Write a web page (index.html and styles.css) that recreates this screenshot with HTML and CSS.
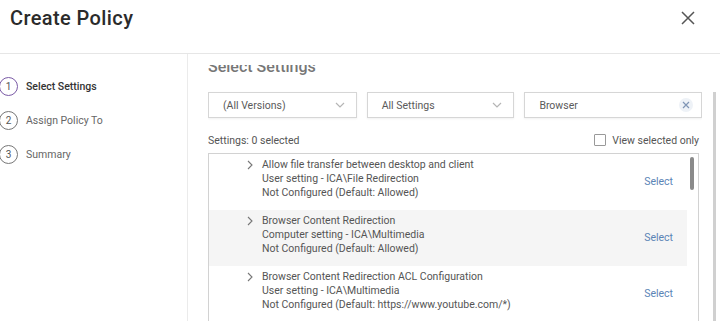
FILE: index.html
```html
<!DOCTYPE html>
<html lang="en">
<head>
    <meta charset="UTF-8">
    <title>Create Policy</title>
    <link rel="stylesheet" href="styles.css">
</head>
<body>
    <div class="dialog">
        <div class="head">
            <h1>Create Policy</h1>
            <svg class="close" width="14" height="14" viewBox="0 0 14 14">
                <path d="M1 1 L13 13 M13 1 L1 13" stroke="#555" stroke-width="1.5" fill="none"/>
            </svg>
        </div>
        <div class="main">
            <div class="steps">
                <div class="step active"><span class="num">1</span>Select Settings</div>
                <div class="step"><span class="num">2</span>Assign Policy To</div>
                <div class="step"><span class="num">3</span>Summary</div>
            </div>
            <div class="content">
                <div class="scroll">
                    <h2>Select Settings</h2>
                    <div class="filters">
                        <div class="field f1">(All Versions)
                            <svg width="10" height="6" viewBox="0 0 10 6"><path d="M1 1 L5 5 L9 1" stroke="#b5b5b5" stroke-width="1.2" fill="none"/></svg>
                        </div>
                        <div class="field f2">All Settings
                            <svg width="10" height="6" viewBox="0 0 10 6"><path d="M1 1 L5 5 L9 1" stroke="#b5b5b5" stroke-width="1.2" fill="none"/></svg>
                        </div>
                        <div class="field f3">Browser
                            <span class="clear"><svg width="8" height="8" viewBox="0 0 8 8"><path d="M1 1 L7 7 M7 1 L1 7" stroke="#7f95b5" stroke-width="1.2" fill="none"/></svg></span>
                        </div>
                    </div>
                    <div class="bar">
                        <span>Settings: 0 selected</span>
                        <label class="check"><span class="box"></span>View selected only</label>
                    </div>
                    <div class="list">
                        <div class="rows">
                            <div class="row">
                                <svg class="chev" width="6" height="10" viewBox="0 0 6 10"><path d="M1 1 L5 5 L1 9" stroke="#777" stroke-width="1.1" fill="none"/></svg>
                                <div class="info">
                                    <div>Allow file transfer between desktop and client</div>
                                    <div>User setting - ICA\File Redirection</div>
                                    <div>Not Configured (Default: Allowed)</div>
                                </div>
                                <a class="sel">Select</a>
                            </div>
                            <div class="row alt">
                                <svg class="chev" width="6" height="10" viewBox="0 0 6 10"><path d="M1 1 L5 5 L1 9" stroke="#777" stroke-width="1.1" fill="none"/></svg>
                                <div class="info">
                                    <div>Browser Content Redirection</div>
                                    <div>Computer setting - ICA\Multimedia</div>
                                    <div>Not Configured (Default: Allowed)</div>
                                </div>
                                <a class="sel">Select</a>
                            </div>
                            <div class="row">
                                <svg class="chev" width="6" height="10" viewBox="0 0 6 10"><path d="M1 1 L5 5 L1 9" stroke="#777" stroke-width="1.1" fill="none"/></svg>
                                <div class="info">
                                    <div>Browser Content Redirection ACL Configuration</div>
                                    <div>User setting - ICA\Multimedia</div>
                                    <div>Not Configured (Default: https://www.youtube.com/*)</div>
                                </div>
                                <a class="sel">Select</a>
                            </div>
                        </div>
                        <div class="track"><div class="thumb"></div></div>
                    </div>
                </div>
                <div class="pagebar"></div>
            </div>
        </div>
    </div>
</body>
</html>
```

FILE: styles.css
```css
*{
    box-sizing: border-box;
}
body{
    margin: 0;
    padding: 0;
    font-family: Roboto, "Liberation Sans", sans-serif;
    color: #555;
    background: #fff;
}
.dialog{
    width: 720px;
    height: 321px;
    overflow: hidden;
    display: flex;
    flex-direction: column;
}
    .head{
        height: 54px;
        flex: none;
        border-bottom: 1px solid #e6e6e6;
        display: flex;
        justify-content: space-between;
        padding: 5px 25px 0 10px;
    }
        .head h1{
            margin: 0;
            font-size: 20px;
            font-weight: 500;
            letter-spacing: 0.4px;
            color: #2b2b2b;
            line-height: 26px;
        }
        .close{
            margin-top: 6px;
        }
    .main{
        flex: 1;
        display: flex;
        min-height: 0;
    }
        .steps{
            width: 188px;
            flex: none;
            border-right: 1px solid #ebebeb;
            padding-top: 22px;
        }
            .step{
                display: flex;
                align-items: center;
                height: 20px;
                margin-bottom: 14px;
                font-size: 10.5px;
                color: #666;
            }
            .step .num{
                width: 19px;
                height: 19px;
                margin-left: -1px;
                margin-right: 8px;
                border: 1.3px solid #777;
                border-radius: 50%;
                display: flex;
                align-items: center;
                justify-content: center;
                font-size: 10px;
                color: #555;
            }
            .step.active{
                color: #333;
                font-weight: 500;
            }
            .step.active .num{
                border-color: #7a5aa6;
                font-weight: 400;
            }
        .content{
            flex: 1;
            display: flex;
            padding: 11px 0 0 20px;
            min-width: 0;
        }
            .scroll{
                width: 494px;
                overflow: hidden;
            }
                .scroll h2{
                    margin: -8px 0 0;
                    font-size: 16px;
                    line-height: 20px;
                    font-weight: 500;
                    color: #777;
                }
                .filters{
                    display: flex;
                    gap: 10px;
                    margin-top: 15px;
                }
                    .field{
                        height: 26px;
                        border: 1px solid #d6d6d6;
                        box-shadow: 0 1px 2px rgba(0,0,0,0.06);
                        display: flex;
                        align-items: center;
                        justify-content: space-between;
                        padding: 0 11px 0 14px;
                        font-size: 10.5px;
                        color: #5a5a5a;
                    }
                    .f1{ width: 149px; }
                    .f2{ width: 148px; }
                    .f3{ width: 178px; padding-right: 8px; }
                    .clear{
                        width: 14px;
                        height: 14px;
                        border-radius: 50%;
                        background: #eef2f7;
                        display: flex;
                        align-items: center;
                        justify-content: center;
                    }
                .bar{
                    display: flex;
                    justify-content: space-between;
                    align-items: center;
                    margin-top: 14px;
                    height: 16px;
                    font-size: 10.5px;
                    color: #555;
                    padding-right: 3px;
                }
                    .check{
                        display: flex;
                        align-items: center;
                        gap: 6px;
                    }
                    .check .box{
                        width: 12px;
                        height: 12px;
                        border: 1px solid #999;
                        border-radius: 1px;
                    }
                .list{
                    margin-top: 5px;
                    width: 491px;
                    border: 1px solid #d2d2d2;
                    display: flex;
                }
                    .rows{
                        flex: 1;
                    }
                        .row{
                            display: flex;
                            align-items: center;
                            height: 56px;
                            padding: 4px 14px 10px 38px;
                            font-size: 10.5px;
                            line-height: 14px;
                            color: #555;
                        }
                        .row.alt{
                            background: #f5f5f5;
                        }
                            .chev{
                                align-self: flex-start;
                                margin-top: 2px;
                                margin-right: 9px;
                            }
                            .info{
                                flex: 1;
                            }
                            .sel{
                                color: #5b84b6;
                                margin-top: 6px;
                            }
                    .track{
                        width: 11px;
                        flex: none;
                        padding: 3px 0 0 3px;
                    }
                        .thumb{
                            width: 4px;
                            height: 33px;
                            background: #8a8a8a;
                            border-radius: 2px;
                        }
            .pagebar{
                width: 3px;
                margin: 27px 0 0 11px;
                background: #d0d0d0;
            }
```
